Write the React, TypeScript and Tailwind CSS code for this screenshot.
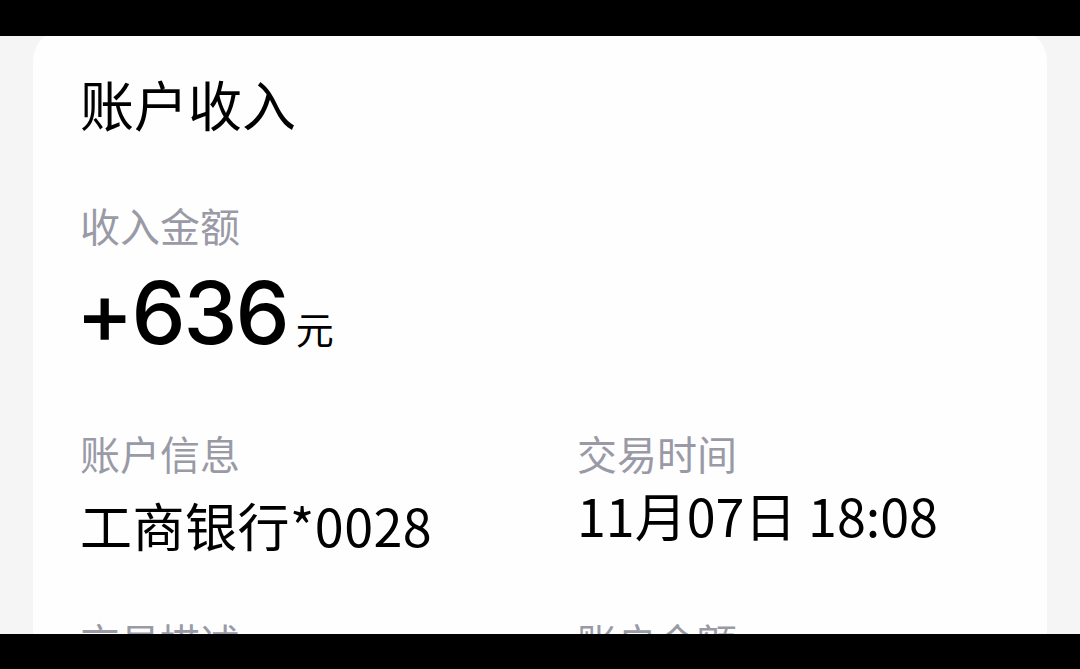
const font = { fontFamily: '"Noto Sans CJK SC", "Noto Sans", sans-serif' };
const digits = { fontFamily: 'Inter, "Noto Sans CJK SC", sans-serif' };

function Label({ children }: { children: React.ReactNode }) {
  return <div className="text-[40px] leading-none text-[#9a9aa7]">{children}</div>;
}

export default function App() {
  return (
    <div className="h-screen w-full flex flex-col overflow-hidden bg-[#f5f5f5]" style={font}>
      <div className="relative z-10 h-[36px] shrink-0 bg-black" />
      <div className="flex-1 overflow-hidden px-[33px]">
        <div className="-mt-[7px] h-[700px] rounded-[32px] bg-[#fefefe] pl-[47px] pt-[48px] text-black">
          <div className="text-[54px] leading-none">账户收入</div>

          <div className="mt-[74px]">
            <Label>收入金额</Label>
          </div>
          <div className="-ml-[4px] mt-[25px] flex items-baseline">
            <span className="text-[86px] font-medium leading-none tracking-[-2px]" style={digits}>
              +636
            </span>
            <span className="ml-[8px] text-[38px] leading-none">元</span>
          </div>

          <div className="mt-[77px] grid grid-cols-[497px_1fr]">
            <div>
              <Label>账户信息</Label>
              <div className="mt-[26px] text-[52px] leading-none tracking-[0.5px]">工商银行*0028</div>
            </div>
            <div>
              <Label>交易时间</Label>
              <div className="mt-[16px] text-[52px] leading-none">11月07日 18:08</div>
            </div>
            <div className="mt-[70px]">
              <Label>交易描述</Label>
            </div>
            <div className="mt-[70px]">
              <Label>账户余额</Label>
            </div>
          </div>
        </div>
      </div>
      <div className="relative z-10 h-[35px] shrink-0 bg-black" />
    </div>
  );
}
